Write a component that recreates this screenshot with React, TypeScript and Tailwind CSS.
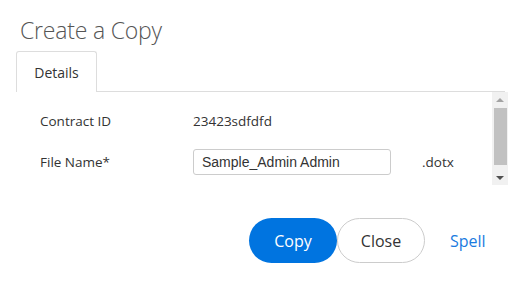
import React from "react";

export default function App() {
  return (
    <div className="w-[525px] h-[308px] bg-white text-[#333] relative" style={{ fontFamily: '"Open Sans", "Noto Sans", sans-serif' }}>
      <div className="pl-[20px] pt-[14px] text-[23px] font-light text-[#555] leading-[32px] tracking-[-0.2px]">Create a Copy</div>
      <div className="flex mt-[5px] pl-[16px] pr-[20px]">
        <div className="w-[81px] h-[41px] border border-[#ddd] border-b-0 rounded-t-[3px] flex items-center justify-center text-[14px] text-[#333] bg-white">Details</div>
        <div className="flex-1 border-b border-[#ddd]" />
      </div>
      <div className="flex pl-[16px] pr-[17px]">
        <div className="flex-1 pl-[24px] pt-[18px] text-[13.5px]">
          <div className="flex items-center h-[22px]">
            <div className="w-[153px]">Contract ID</div>
            <div>23423sdfdfd</div>
          </div>
          <div className="flex items-center mt-[17px]">
            <div className="w-[153px]">File Name*</div>
            <div className="w-[198px] h-[26px] border border-[#ccc] rounded-[3px] flex items-center pl-[8px] text-[14px]" style={{ fontFamily: '"Liberation Sans", Arial, sans-serif' }}>Sample_Admin Admin</div>
            <div className="ml-[31px]">.dotx</div>
          </div>
        </div>
        <div className="w-[16px] h-[93px] bg-[#f1f1f1] flex flex-col items-center">
          <div className="h-[16px] flex items-center justify-center">
            <div className="w-0 h-0 border-l-[4px] border-r-[4px] border-b-[4px] border-l-transparent border-r-transparent border-b-[#a3a3a3]" />
          </div>
          <div className="w-[13px] h-[57px] bg-[#c1c1c1]" />
          <div className="flex-1 flex items-end justify-center pb-[5px]">
            <div className="w-0 h-0 border-l-[4px] border-r-[4px] border-t-[4px] border-l-transparent border-r-transparent border-t-[#505050]" />
          </div>
        </div>
      </div>
      <div className="flex items-center mt-[33px] pl-[249px]">
        <button className="w-[88px] h-[45px] rounded-full bg-[#0074e0] text-white text-[16px]">Copy</button>
        <button className="w-[88px] h-[45px] rounded-full border border-[#ccc] bg-white text-[#333] text-[16px]">Close</button>
        <span className="ml-[25px] text-[16px] text-[#1a7be0]">Spell</span>
      </div>
    </div>
  );
}
